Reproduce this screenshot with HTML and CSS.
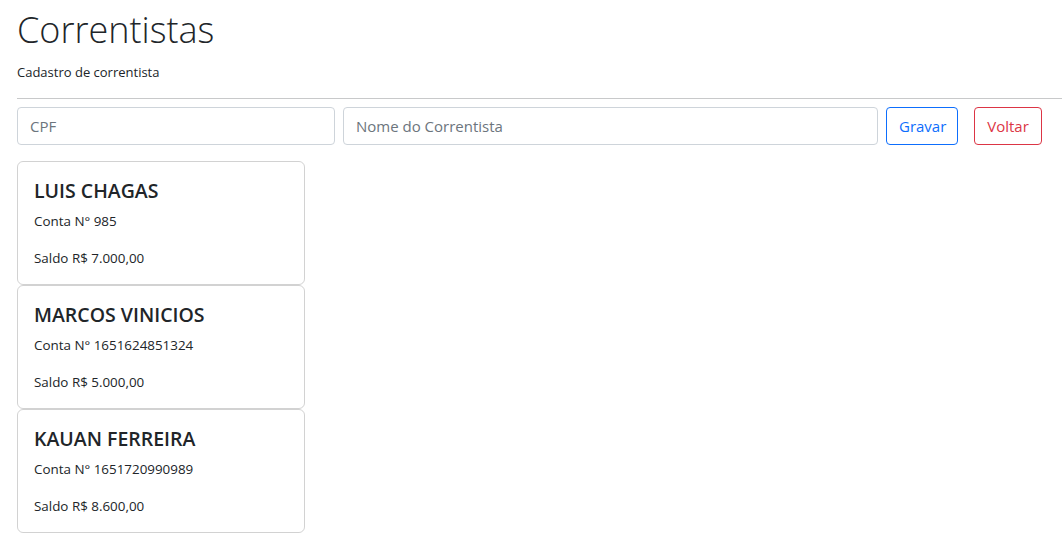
FILE: index.html
```html
<!DOCTYPE html>
<html lang="pt-BR">
<head>
<meta charset="utf-8">
<title>Correntistas</title>
<link rel="stylesheet" href="styles.css">
</head>
<body>
<header class="page-header">
  <h1 class="title">Correntistas</h1>
  <p class="subtitle">Cadastro de correntista</p>
</header>
<hr class="divider">
<main class="content">
  <form class="entry-form">
    <input class="field field-cpf" type="text" placeholder="CPF">
    <input class="field field-name" type="text" placeholder="Nome do Correntista">
    <button type="button" class="btn btn-primary-outline">Gravar</button>
    <button type="button" class="btn btn-danger-outline">Voltar</button>
  </form>
  <section class="cards">
    <article class="card">
      <h5 class="card-title">LUIS CHAGAS</h5>
      <p class="card-text">Conta N° 985</p>
      <p class="card-text">Saldo R$ 7.000,00</p>
    </article>
    <article class="card">
      <h5 class="card-title">MARCOS VINICIOS</h5>
      <p class="card-text">Conta N° 1651624851324</p>
      <p class="card-text">Saldo R$ 5.000,00</p>
    </article>
    <article class="card">
      <h5 class="card-title">KAUAN FERREIRA</h5>
      <p class="card-text">Conta N° 1651720990989</p>
      <p class="card-text">Saldo R$ 8.600,00</p>
    </article>
  </section>
</main>
</body>
</html>
```

FILE: styles.css
```css
* { box-sizing: border-box; }
html, body { margin: 0; padding: 0; }
body {
  font-family: "Open Sans", "Noto Sans", sans-serif;
  color: #212529;
  background: #fff;
  font-size: 16px;
  line-height: 1.5;
}
.page-header {
  padding: 5px 20px 0 17px;
}
.title {
  margin: 0;
  font-size: 36px;
  font-weight: 300;
  line-height: 50px;
}
.subtitle {
  margin: 7px 0 0;
  font-size: 13px;
  line-height: 21px;
}
.divider {
  margin: 15px 0 8px 17px;
  border: 0;
  border-top: 1px solid #c8c9ca;
}
.content {
  padding: 0 20px 0 17px;
}
.entry-form {
  display: flex;
  align-items: center;
  gap: 8px;
  margin: 0 0 16px;
}
.field {
  height: 38px;
  padding: 6px 12px;
  font-family: inherit;
  font-size: 15px;
  color: #212529;
  border: 1px solid #ced4da;
  border-radius: 4px;
  background: #fff;
}
.field::placeholder { color: #6c757d; }
.field-cpf { width: 318px; }
.field-name { flex: 1; }
.btn {
  height: 38px;
  padding: 6px 12px;
  font-family: inherit;
  font-size: 15px;
  border-radius: 4px;
  background: #fff;
  cursor: pointer;
}
.btn-primary-outline {
  width: 72px;
  color: #0d6efd;
  border: 1px solid #0d6efd;
}
.btn-danger-outline {
  width: 68px;
  margin-left: 8px;
  color: #dc3545;
  border: 1px solid #dc3545;
}
.cards {
  display: flex;
  flex-direction: column;
  align-items: flex-start;
}
.card {
  width: 288px;
  padding: 16px 16px 15px;
  border: 1px solid rgba(0,0,0,0.175);
  border-radius: 6px;
}
.card-title {
  margin: 0 0 8px;
  padding-top: 1px;
  font-size: 19.5px;
  font-weight: 600;
  line-height: 24px;
}
.card-text {
  margin: 0 0 16px;
  font-size: 13.4px;
  line-height: 21px;
}
.card-text:last-child { margin-bottom: 0; }
```
